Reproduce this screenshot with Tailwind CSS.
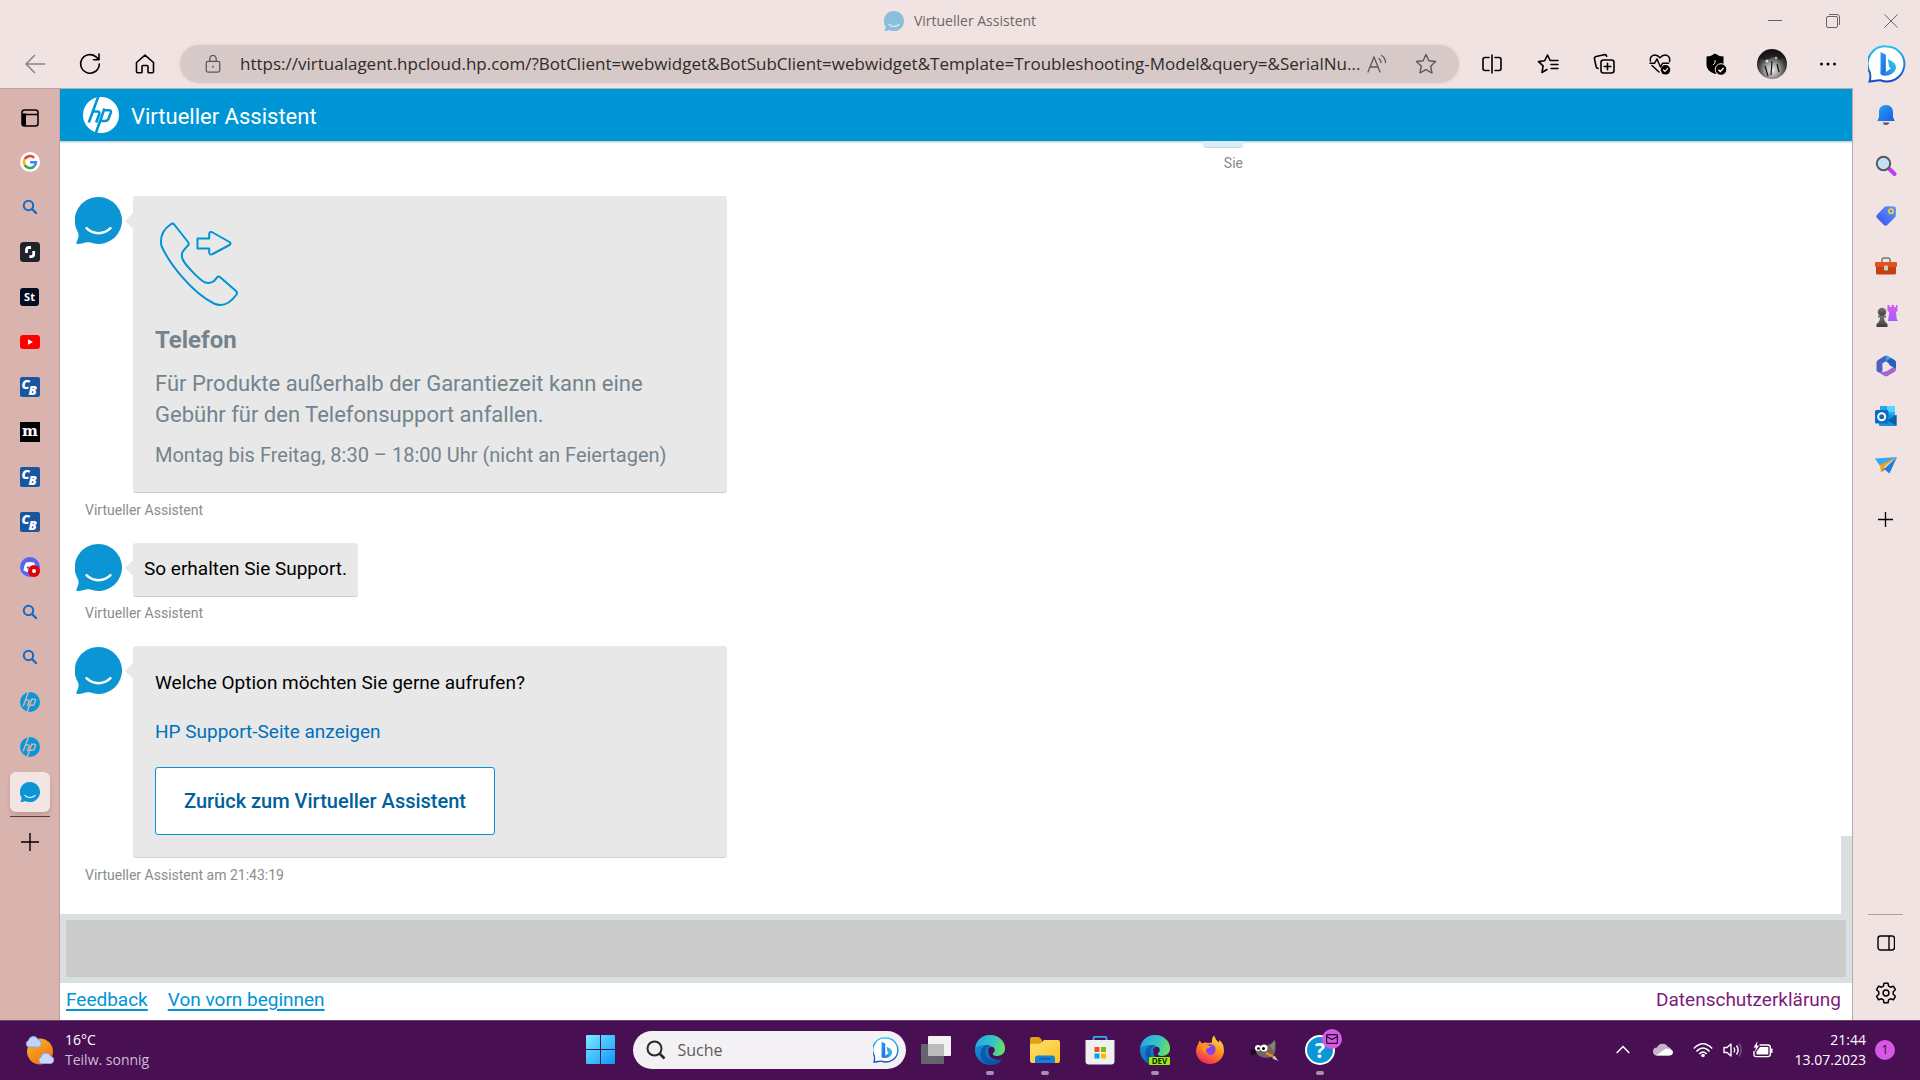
<!DOCTYPE html>
<html lang="de">
<head>
  <meta charset="UTF-8" />
  <meta name="viewport" content="width=device-width, initial-scale=1.0" />
  <title>Virtueller Assistent</title>
  <script src="https://cdn.jsdelivr.net/npm/@tailwindcss/browser@4"></script>
</head>
<body class="h-screen flex flex-col overflow-hidden bg-[#f1e3e2] font-['Open_Sans','Noto_Sans',sans-serif] text-black">

  <!-- Shared icons -->
  <svg class="absolute size-0" aria-hidden="true">
    <defs>
      <linearGradient id="bingRing" x1="0" y1="0" x2="0" y2="1"><stop offset="0" stop-color="#27c2f0" /><stop offset="1" stop-color="#1747c4" /></linearGradient>
      <linearGradient id="bingStem" x1="0" y1="0" x2="1" y2="1"><stop offset="0" stop-color="#2aa5f7" /><stop offset="1" stop-color="#1c5fdf" /></linearGradient>
      <linearGradient id="bingTail" x1="1" y1="0" x2="0" y2="1"><stop offset="0" stop-color="#37d3e6" /><stop offset="1" stop-color="#2468ea" /></linearGradient>
      <linearGradient id="edgeGreen" x1="0" y1="0.3" x2="1" y2="0.5"><stop offset="0" stop-color="#28a8e6" /><stop offset="0.6" stop-color="#36c5c0" /><stop offset="1" stop-color="#6fe05a" /></linearGradient>
      <linearGradient id="edgeBlue" x1="0" y1="0" x2="0.6" y2="1"><stop offset="0" stop-color="#1b9de2" /><stop offset="1" stop-color="#0a5fb8" /></linearGradient>
      <linearGradient id="bellFill" x1="0" y1="0" x2="1" y2="1"><stop offset="0" stop-color="#1fa5ee" /><stop offset="1" stop-color="#2357e8" /></linearGradient>
      <linearGradient id="winFill" x1="0" y1="0" x2="1" y2="1"><stop offset="0" stop-color="#7cecff" /><stop offset="1" stop-color="#0d95fb" /></linearGradient>
      <linearGradient id="sunFill" x1="0" y1="0" x2="0.6" y2="1"><stop offset="0" stop-color="#f7b92c" /><stop offset="1" stop-color="#f0760f" /></linearGradient>
      <linearGradient id="folderFill" x1="0" y1="0" x2="1" y2="1"><stop offset="0" stop-color="#ffdf72" /><stop offset="1" stop-color="#fcc21f" /></linearGradient>
      <linearGradient id="foxFill" x1="0.8" y1="0" x2="0.3" y2="1"><stop offset="0" stop-color="#ffe14a" /><stop offset="0.5" stop-color="#ff8a1c" /><stop offset="1" stop-color="#f1255f" /></linearGradient>
      <linearGradient id="tagFill" x1="0" y1="1" x2="1" y2="0"><stop offset="0" stop-color="#3c4ff0" /><stop offset="1" stop-color="#5b9bfa" /></linearGradient>
      <linearGradient id="rookFill" x1="0" y1="0" x2="0" y2="1"><stop offset="0" stop-color="#d65cf7" /><stop offset="1" stop-color="#a45cf4" /></linearGradient>
      <linearGradient id="pawnFill" x1="0" y1="0" x2="0" y2="1"><stop offset="0" stop-color="#777" /><stop offset="1" stop-color="#3d3a39" /></linearGradient>
      <radialGradient id="avatarFill" cx="0.5" cy="0.7" r="0.6"><stop offset="0" stop-color="#eee" /><stop offset="0.35" stop-color="#aaa" /><stop offset="0.7" stop-color="#4c4c4c" /><stop offset="1" stop-color="#161616" /></radialGradient>
    </defs>
    <symbol id="bubble" viewBox="0 0 47 47">
      <path d="M23.500 0a23.500 23.500 0 1 1-8 45.600c-4-1.500-8.500 1.400-12.600 1.400-1.400 0-1.900-1-1.300-2.200 1.500-3 2.800-6.500 1.400-9.300A23.500 23.500 0 0 1 23.500 0z" fill="#0b95d4" />
      <path d="M11.500 31.200c6.500 6.700 17.500 6.700 24 0" fill="none" stroke="#fff" stroke-width="2.400" stroke-linecap="round" />
    </symbol>
    <symbol id="hp" viewBox="0 0 36 36">
      <circle cx="18" cy="18" r="18" fill="currentColor" />
      <path d="M15.500-1 5.800 25.500M9.800 14.500h4.500q2.800 0 1.900 2.700l-3 8.300M21.500 11.500 12.500 37M20.600 13.200h5.200q2.800 0 1.900 2.700l-2 5.500q-.9 2.600-3.700 2.600h-4.500" fill="none" class="stroke-(--cut)" stroke-width="2.600" />
    </symbol>
    <symbol id="find" viewBox="0 0 20 20">
      <circle cx="8.500" cy="8.500" r="4.700" fill="none" stroke="#0f6cc9" stroke-width="2" />
      <path d="m12 12 4 4" stroke="#0f6cc9" stroke-width="2.400" stroke-linecap="round" />
    </symbol>
    <symbol id="cb" viewBox="0 0 20 20">
      <rect width="20" height="20" rx="2" fill="#1a559f" />
      <text x="1.500" y="11.500" font-family="Open Sans, sans-serif" font-size="13" font-weight="800" font-style="italic" fill="#fff">C</text>
      <text x="8.500" y="18" font-family="Open Sans, sans-serif" font-size="13" font-weight="800" font-style="italic" fill="#fff" stroke="#1a559f" stroke-width="1.500" paint-order="stroke">B</text>
    </symbol>
    <symbol id="bing" viewBox="0 0 38 38">
      <path d="M19 1.500a17.500 17.500 0 1 1-6.500 33.800c-3-.6-6.500 1.200-11 1.200 1.600-4 .7-6.500.4-9A17.500 17.500 0 0 1 19 1.500z" fill="#fff" stroke="url(#bingRing)" stroke-width="2" />
      <path d="m12.500 7 4.500 2.200c.5.300.8.800.8 1.400v18l-2.500 1.500c-1.800.8-2.800-.5-2.800-2z" fill="url(#bingStem)" />
      <path d="M19.800 14.200c4.800 1.800 8.200 3.800 8.200 8.300 0 5.500-8 8.800-11.500 8.200-2.800-.4-4-2-4-4.200 2 2.200 6 .9 10.500-3.200l-1.800-1.300z" fill="url(#bingTail)" />
    </symbol>
    <symbol id="edge" viewBox="0 0 30 30">
      <circle cx="15" cy="15" r="15" fill="url(#edgeBlue)" />
      <path d="M.3 12.500C1.500 5 7.500 0 15 0c8.500 0 15 6 15 13 0 5.500-4 8-8 8-3.500 0-5.200-1.200-4.500-2.200 2.800-3 .9-8.300-5-8.800C7.500 9.600 2.500 10.500.3 12.500z" fill="url(#edgeGreen)" />
      <path d="M10.500 17c0-3.500 2.300-6 5-6-4-2.500-9 .5-9.800 6-.8 6.500 4.300 13 11 13 5 0 8.800-2.500 10.800-6-6 3.500-17 2.500-17-7z" fill="#0c4f9d" opacity=".75" />
      <path d="M17.500 18.800c-.7 1 1 2.200 4.500 2.200 3.500 0 6.500-1.500 8-4.500V22l-2.500 2c-1 .3-2.500.8-4.500.8-5 0-9.500-3-9.500-7.300z" fill="#480f52" />
      <path d="M13.200 15a3.300 3.300 0 1 1 5 2.800l-1 2.700c-2.500-1-4-3-4-5.500z" fill="#480f52" />
    </symbol>
  </svg>

  <!-- Title bar -->
  <header class="grid grid-cols-[1fr_auto_1fr] items-center h-[41px] shrink-0">
    <span></span>
    <div class="flex items-center gap-[10px] text-sm text-[#6f6766]">
      <svg class="size-5 opacity-45"><use href="#bubble" /></svg>
      <span>Virtueller Assistent</span>
    </div>
    <div class="flex justify-end text-[#6b6463]">
      <button aria-label="Minimieren" class="w-[58px] h-10 grid place-items-center"><svg class="size-[14px]" viewBox="0 0 14 14" stroke="currentColor"><path d="M0 6.500h14" /></svg></button>
      <button aria-label="Verkleinern" class="w-[58px] h-10 grid place-items-center"><svg class="size-[14px]" viewBox="0 0 14 14" fill="none" stroke="currentColor"><rect x=".5" y="2.500" width="11" height="11" rx="1.500" /><path d="M3 .5h8q2.500 0 2.500 2.500v8" /></svg></button>
      <button aria-label="Schließen" class="w-[58px] h-10 grid place-items-center"><svg class="size-[14px]" viewBox="0 0 14 14" stroke="currentColor"><path d="m.5.5 13 13M13.500.5l-13 13" /></svg></button>
    </div>
  </header>

  <!-- Toolbar -->
  <nav class="flex items-center h-[47px] shrink-0 pl-[7px] pr-[2px] pb-[2px]">
    <button aria-label="Zurück" class="w-[55px] h-10 grid place-items-center text-[#8a8281]"><svg class="size-5" viewBox="0 0 20 20" fill="none" stroke="currentColor" stroke-width="1.500" stroke-linecap="round" stroke-linejoin="round"><path d="M19.500 10H1M9.500 1.500 1 10l8.500 8.500" /></svg></button>
    <button aria-label="Aktualisieren" class="w-[55px] h-10 grid place-items-center"><svg class="size-[22px]" viewBox="0 0 22 22" fill="none" stroke="currentColor" stroke-width="1.600" stroke-linecap="round" stroke-linejoin="round"><path d="M20.300 11a9.300 9.300 0 1 1-3.300-7.200L19.800 6.500M20 1v5.700h-5.500" /></svg></button>
    <button aria-label="Startseite" class="w-[55px] h-10 grid place-items-center"><svg class="size-5" viewBox="0 0 20 20" fill="none" stroke="currentColor" stroke-width="1.600" stroke-linejoin="round"><path d="M1.500 8.500 10 1.200l8.500 7.300v9.300q0 1-1 1h-3.700q-.8 0-.8-.8v-5.500q0-1-1-1H8q-1 0-1 1V18q0 .8-.8.800H2.500q-1 0-1-1z" /></svg></button>

    <div class="flex-1 min-w-0 flex items-center h-[38px] ml-2 mr-[5px] rounded-full bg-[#d7c9c8] pl-6 pr-5 text-[#5c5756] shadow-[0_0_4px_#e2d2d1]">
      <svg class="size-[18px] shrink-0" viewBox="0 0 18 20" fill="none" stroke="currentColor" stroke-width="1.400"><rect x="1.500" y="7" width="15" height="12" rx="2" /><path d="M5.500 7V4a3.500 3.500 0 0 1 7 0v3" /><circle cx="9" cy="13" r="1" fill="currentColor" stroke="none" /></svg>
      <input aria-label="Adresse" class="flex-1 min-w-0 ml-[18px] text-[17px] text-[#2f2b2b] outline-none" value="https://virtualagent.hpcloud.hp.com/?BotClient=webwidget&amp;BotSubClient=webwidget&amp;Template=Troubleshooting-Model&amp;query=&amp;SerialNu..." />
      <button aria-label="Laut vorlesen" class="w-7 h-8 mr-[10px] grid place-items-center"><svg class="size-5" viewBox="0 0 20 20" fill="none" stroke="currentColor" stroke-width="1.300" stroke-linecap="round"><path d="m1 18 6-15 6 15M3 13h8M12 4.500q2 1.500 2 4M14.500 1.500q4 2.500 4 7" /></svg></button>
      <button aria-label="Favorit" class="w-[50px] h-8 grid place-items-center -mr-3"><svg class="size-[22px]" viewBox="0 0 22 22" fill="none" stroke="currentColor" stroke-width="1.400" stroke-linejoin="round"><path d="m11 1.500 2.900 6.200 6.700.8-5 4.700 1.400 6.800-6-3.400L5 20l1.400-6.800-5-4.700 6.700-.8z" /></svg></button>
    </div>

    <button aria-label="Geteilter Bildschirm" class="w-14 h-10 grid place-items-center"><svg class="size-5" viewBox="0 0 20 20" fill="none" stroke="currentColor" stroke-width="1.600" stroke-linecap="round"><path d="M10 1v18M7 3.500H3q-2 0-2 2v9q0 2 2 2h4M13 3.500h4q2 0 2 2v9q0 2-2 2h-4" /></svg></button>
    <button aria-label="Favoriten" class="w-14 h-10 grid place-items-center"><svg class="size-[22px]" viewBox="0 0 22 22" fill="none" stroke="currentColor" stroke-width="1.600" stroke-linecap="round" stroke-linejoin="round"><path d="M13.200 7.500 10.500 2 7.700 7.700l-6.200.9 4.600 4.300L5 19.500l5-3M13.500 7.500H21M14 11.500h7M14 15.500h7" /></svg></button>
    <button aria-label="Sammlungen" class="w-14 h-10 grid place-items-center"><svg class="size-[22px]" viewBox="0 0 22 22" fill="none" stroke="currentColor" stroke-width="1.600" stroke-linecap="round" stroke-linejoin="round"><path d="M5 15.500q-1.500-.3-1.900-1.800L1.500 6q-.4-2 1.600-2.500l8-1.800q2-.4 2.600 1.500" /><rect x="8" y="7" width="13" height="13" rx="2.500" /><path d="M14.500 10.200v6.600M11.200 13.500h6.600" /></svg></button>
    <button aria-label="Browser-Grundlagen" class="w-14 h-10 grid place-items-center"><svg class="size-[22px]" viewBox="0 0 22 22" fill="none" stroke="currentColor" stroke-width="1.500" stroke-linecap="round" stroke-linejoin="round"><path d="M1.500 8C.5 4.500 3 2 6 2c2 0 3.500 1 5 2.800C12.500 3 14 2 16 2c3 0 5.500 2.500 4.500 6.500M3 12.500l7 6.500M1 10.300h4.500L8 6l3.500 8 2-3.700h6" /><circle cx="16.500" cy="16.800" r="4.800" fill="#000" stroke="none" /><path d="m14.500 17 1.400 1.400 2.600-2.800" stroke="#f1e3e2" stroke-width="1.300" /></svg></button>
    <button aria-label="Erweiterung" class="w-14 h-10 grid place-items-center"><svg class="size-[22px]" viewBox="0 0 22 22"><path d="M10 .5q3.500 2.800 8.500 3V12c0 5-5 7.500-8.500 9C6 19.500 1.500 16.500 1.500 12V3.500Q6.500 3.300 10 .5z" /><path d="M10 7v3l-2 2" stroke="#f1e3e2" /><circle cx="16" cy="16.500" r="5.800" stroke="#f1e3e2" /><path d="m13.500 16.700 1.800 1.800 3.300-3.500" fill="none" stroke="#fff" stroke-width="1.400" /></svg></button>
    <button aria-label="Profil" class="w-14 h-10 grid place-items-center"><svg class="size-[30px]" viewBox="0 0 30 30"><circle cx="15" cy="15" r="15" fill="url(#avatarFill)" /><path d="M2 8C8 1 20 0 27 7l-4 4q-6-6-10-1l-6 1z" fill="#151515" opacity=".7" /><path d="m8 17 3 10M20 15l2 8M15 12l-1 14" stroke="#111" stroke-width="1.200" /><circle cx="10" cy="12" r="1.500" fill="#ddd" /><circle cx="19" cy="9" r="1.200" fill="#bbb" /></svg></button>
    <button aria-label="Einstellungen und mehr" class="w-14 h-10 grid place-items-center"><svg class="size-[18px]" viewBox="0 0 18 18"><circle cx="2.500" cy="9" r="1.500" /><circle cx="9" cy="9" r="1.500" /><circle cx="15.500" cy="9" r="1.500" /></svg></button>
    <button aria-label="Bing-Chat" class="w-[62px] h-10 grid place-items-center"><svg class="size-[38px]"><use href="#bing" /></svg></button>
  </nav>

  <div class="flex flex-1 min-h-0">
    <!-- Vertical tabs -->
    <aside class="w-[60px] shrink-0 flex flex-col items-center pt-[7px] bg-[#d9b3ae] border-t border-r border-[#bf9f9b]">
      <button aria-label="Registerkarten" class="h-[43px] w-10 grid place-items-center"><svg class="size-[18px]" viewBox="0 0 18 18" fill="none" stroke="#000" stroke-width="1.500"><rect x="1" y="1" width="16" height="16" rx="2.500" /><path d="M1 5.500h16" /><path d="M1 4.500h4V17H3q-2 0-2-2z" fill="#000" stroke="none" /></svg></button>
      <button aria-label="Google" class="h-[45px] w-10 grid place-items-center"><svg class="size-5" viewBox="0 0 20 20" fill="none" stroke-width="2.600"><circle cx="10" cy="10" r="10" fill="#fff" /><path d="M14.200 5.800A6 6 0 0 0 4.700 7.200" stroke="#ea4335" /><path d="M4.700 7.200a6 6 0 0 0 0 5.600" stroke="#fbbc05" /><path d="M4.700 12.800a6 6 0 0 0 9.300 1.700" stroke="#34a853" /><path d="M14 14.500a6 6 0 0 0 2-4.200h-6" stroke="#4285f4" /></svg></button>
      <button aria-label="Suche 1" class="h-[45px] w-10 grid place-items-center"><svg class="size-5"><use href="#find" /></svg></button>
      <button aria-label="Shutterstock" class="h-[45px] w-10 grid place-items-center"><svg class="size-5" viewBox="0 0 20 20" fill="none" stroke="#fff" stroke-width="2.800"><rect width="20" height="20" rx="3.500" fill="#20222c" stroke="none" /><path d="M6.500 11V8q0-2.500 2.500-2.500h2M13.700 9v3q0 2.700-2.500 2.700H9.300" /></svg></button>
      <button aria-label="Adobe Stock" class="h-[45px] w-10 grid place-items-center"><svg class="size-5" viewBox="0 0 20 20"><rect y="1" width="19" height="18" rx="3" fill="#050d22" /><text x="9.500" y="14" text-anchor="middle" font-family="Open Sans, sans-serif" font-size="11" font-weight="700" fill="#fff">St</text></svg></button>
      <button aria-label="YouTube" class="h-[45px] w-10 grid place-items-center"><svg class="size-5" viewBox="0 0 20 20"><rect y="3" width="20" height="14" rx="3" fill="#f00" /><path d="m8 7.200 5 2.800-5 2.800z" fill="#fff" /></svg></button>
      <button aria-label="ComputerBase 1" class="h-[45px] w-10 grid place-items-center"><svg class="size-5"><use href="#cb" /></svg></button>
      <button aria-label="Magazin" class="h-[45px] w-10 grid place-items-center"><svg class="size-5" viewBox="0 0 20 20"><rect width="20" height="20" /><text x="10" y="14" text-anchor="middle" font-family="DejaVu Serif, serif" font-size="15" font-weight="700" fill="#fff">m</text></svg></button>
      <button aria-label="ComputerBase 2" class="h-[45px] w-10 grid place-items-center"><svg class="size-5"><use href="#cb" /></svg></button>
      <button aria-label="ComputerBase 3" class="h-[45px] w-10 grid place-items-center"><svg class="size-5"><use href="#cb" /></svg></button>
      <button aria-label="Discord" class="h-[45px] w-10 grid place-items-center"><svg class="size-5" viewBox="0 0 20 20"><circle cx="10" cy="10" r="10" fill="#5865f2" /><path d="M6 5.500q4-1 8 0 2.500 3.500 2.500 8L13 15H7l-3.500-1.500Q3.500 9 6 5.500z" fill="#fff" /><circle cx="8" cy="10.500" r="1.200" fill="#5865f2" /><circle cx="14" cy="14" r="6" fill="#e00109" /><circle cx="14" cy="14" r="2" fill="#fff" /></svg></button>
      <button aria-label="Suche 2" class="h-[45px] w-10 grid place-items-center"><svg class="size-5"><use href="#find" /></svg></button>
      <button aria-label="Suche 3" class="h-[45px] w-10 grid place-items-center"><svg class="size-5"><use href="#find" /></svg></button>
      <button aria-label="HP 1" class="h-[45px] w-10 grid place-items-center text-[#0a97d6] [--cut:#d9b3ae]"><svg class="size-5"><use href="#hp" /></svg></button>
      <button aria-label="HP 2" class="h-[45px] w-10 grid place-items-center text-[#0a97d6] [--cut:#d9b3ae]"><svg class="size-5"><use href="#hp" /></svg></button>
      <button aria-label="Virtueller Assistent" class="size-10 mt-[3px] mb-1 grid place-items-center rounded-md bg-[#f3e5e4] shadow-md"><svg class="size-5"><use href="#bubble" /></svg></button>
      <hr class="w-10 border-[#4d3f3e]" />
      <button aria-label="Neue Registerkarte" class="h-[50px] w-10 grid place-items-center"><svg class="size-[18px]" viewBox="0 0 18 18" stroke="#000" stroke-width="1.400"><path d="M9 0v18M0 9h18" /></svg></button>
    </aside>

    <!-- Chat page -->
    <main class="flex-1 min-w-0 flex flex-col bg-white border-t border-r border-[#b9a9a8] font-[Roboto,'Noto_Sans',sans-serif]">
      <header class="h-[52px] shrink-0 flex items-center gap-3 pl-[23px] bg-[#0096d6] text-white shadow-[0_1px_2px_#bbb]">
        <svg class="size-9 [--cut:#0096d6]"><use href="#hp" /></svg>
        <h1 class="pt-1 text-[22px] leading-[30px]">Virtueller Assistent</h1>
      </header>

      <div class="flex-1 min-h-0 flex">
        <section class="flex-1 min-w-0 flex flex-col text-[19px]">
          <div class="w-[1183px] flex flex-col items-end h-[55px]">
            <div class="w-10 h-[7px] rounded-b-sm bg-[#d9edf8] border-b border-[#c3d4dd]"></div>
            <span class="mt-[5px] text-sm leading-5 text-[#8c8c8c]">Sie</span>
          </div>

          <article class="flex pl-[15px]">
            <svg class="w-[47px] h-[47px] mt-px shrink-0"><use href="#bubble" /></svg>
            <div class="mt-[17px] ml-[3px] size-0 shrink-0 border-y-8 border-r-8 border-y-transparent border-r-[#e8e8e8]"></div>
            <div class="w-[594px] h-[297px] px-[22px] pt-[26px] rounded-[3px] bg-[#e8e8e8] border-b border-[#cfcfcf] text-[#74838d]">
              <svg class="block w-[90px] h-[84px]" viewBox="0 0 90 84" fill="none" stroke="#0093d6" stroke-width="2" stroke-linejoin="round"><path d="M15.500 2.500q2-2 3.700 0L33 20q1.500 2 0 3.500c-5 5-7.500 7.500-5.500 13.500C30 43 44 57 49 60c4 1.500 7.500 1 10-1l3-3.500q1.500-1.800 3.500 0L81 69q1.700 1.700.5 3.500C74 83 67 85 59 81.500 37 71 14 41 6.500 24 4.500 14 9 7 15.500 2.500z" /><path d="M42.500 16.500h11.700V11.500q1-2.500 3.500-1L74.500 20q2 1.500 0 3L57.700 32q-2.500 1.500-3.500-1v-4.500H42.500z" /></svg>
              <h2 class="mt-[18px] text-2xl font-bold">Telefon</h2>
              <p class="mt-[12px] text-[22px] leading-[31px]">Für Produkte außerhalb der Garantiezeit kann eine<br />Gebühr für den Telefonsupport anfallen.</p>
              <p class="mt-[10px] text-xl leading-[31px]">Montag bis Freitag, 8:30 – 18:00 Uhr (nicht an Feiertagen)</p>
            </div>
          </article>
          <p class="h-[50px] pl-[25px] pt-[7px] text-sm leading-5 text-[#8c8c8c]">Virtueller Assistent</p>

          <article class="flex pl-[15px]">
            <svg class="w-[47px] h-[47px] mt-px shrink-0"><use href="#bubble" /></svg>
            <div class="mt-[17px] ml-[3px] size-0 shrink-0 border-y-8 border-r-8 border-y-transparent border-r-[#e8e8e8]"></div>
            <p class="h-[54px] px-[11px] rounded-[3px] bg-[#e8e8e8] border-b border-[#cfcfcf] leading-[52px]">So erhalten Sie Support.</p>
          </article>
          <p class="h-[49px] pl-[25px] pt-[6px] text-sm leading-5 text-[#8c8c8c]">Virtueller Assistent</p>

          <article class="flex pl-[15px]">
            <svg class="w-[47px] h-[47px] mt-px shrink-0"><use href="#bubble" /></svg>
            <div class="mt-[17px] ml-[3px] size-0 shrink-0 border-y-8 border-r-8 border-y-transparent border-r-[#e8e8e8]"></div>
            <div class="w-[594px] h-[212px] px-[22px] pt-[21px] flex flex-col items-start rounded-[3px] bg-[#e8e8e8] border-b border-[#cfcfcf]">
              <p class="leading-[31px]">Welche Option möchten Sie gerne aufrufen?</p>
              <a href="#" class="mt-[18px] leading-[31px] text-[#0070bd]">HP Support-Seite anzeigen</a>
              <button class="mt-5 h-[68px] px-7 rounded-[3px] border border-[#0093d6] bg-white text-xl font-medium text-[#00609c]">Zurück zum Virtueller Assistent</button>
            </div>
          </article>
          <p class="pl-[25px] pt-[7px] text-sm leading-5 text-[#8c8c8c]">Virtueller Assistent am 21:43:19</p>
        </section>
        <div class="w-[11px] flex flex-col justify-end"><div class="h-[78px] bg-[#dadfe2]"></div></div>
      </div>

      <div class="h-[69px] shrink-0 p-[6px] bg-[#dadfe2]">
        <textarea disabled aria-label="Nachricht" class="block size-full resize-none bg-[#cbcbcb]"></textarea>
      </div>
      <footer class="h-[37px] shrink-0 flex items-center gap-5 pl-[6px] pr-[11px] pb-[3px] text-[19px]">
        <a href="#" class="underline underline-offset-3 decoration-2 text-[#0093d6]">Feedback</a>
        <a href="#" class="underline underline-offset-3 decoration-2 text-[#0093d6]">Von vorn beginnen</a>
        <a href="#" class="ml-auto text-[#7d1a7d]">Datenschutzerklärung</a>
      </footer>
    </main>

    <!-- Edge sidebar -->
    <aside class="w-[67px] shrink-0 flex flex-col items-center pt-[3px] pr-[2px]">
      <button aria-label="Benachrichtigungen" class="size-[50px] grid place-items-center"><svg class="size-[22px]" viewBox="0 0 22 22"><path d="M11 0c4.500 0 7 3 7 7v5l1.700 4H2.300L4 12V7c0-4 2.500-7 7-7z" fill="url(#bellFill)" /><path d="M7.500 17.500h7q-1 2.500-3.500 2.500t-3.500-2.500z" fill="#555" /></svg></button>
      <button aria-label="Suchen" class="size-[50px] grid place-items-center"><svg class="size-[22px]" viewBox="0 0 22 22"><path d="m14.500 14 5 5" stroke="#c13cf5" stroke-width="4" stroke-linecap="round" /><circle cx="8.500" cy="8.500" r="6.700" fill="#c4def2" stroke="#56595a" stroke-width="2" /></svg></button>
      <button aria-label="Einkaufen" class="size-[50px] grid place-items-center"><svg class="size-[22px]" viewBox="0 0 22 22"><path d="m11.500 1.200 7.500.3q2 .2 2 2l-.2 6.500q0 1.500-1 2.500l-7.500 7.500q-1.700 1.500-3.300 0l-7-7q-1.500-1.700 0-3.300L9.500 2q1-.8 2-.8z" fill="url(#tagFill)" /><circle cx="16" cy="6.300" r="2.200" fill="#5b8ff5" stroke="#f5d935" stroke-width="1.500" /></svg></button>
      <button aria-label="Tools" class="size-[50px] grid place-items-center"><svg class="size-6" viewBox="0 0 24 24"><path d="M8 8.500V6q0-2 2-2h4q2 0 2 2v2.500" fill="none" stroke="#777" stroke-width="1.500" /><path d="M2 12h20v7q0 1.500-1.500 1.500h-17Q2 20.500 2 19z" fill="#c5400f" /><rect x="1" y="8" width="22" height="5" rx="1" fill="#e0521f" /><rect x="10" y="11.500" width="4" height="5" rx="1" fill="#c9cdd0" /></svg></button>
      <button aria-label="Spiele" class="size-[50px] grid place-items-center"><svg class="size-6" viewBox="0 0 24 24"><path d="M13.500 1h2v2h2V1h2.500v2h2V1h1.500v6l-1.500 1 .7 7 1.300 2H14l1.300-9-1.800-1z" fill="url(#rookFill)" /><circle cx="8" cy="8" r="4.200" fill="url(#pawnFill)" /><path d="M4 11.500h8v2h-2q0 4 3.500 6.500v3h-11v-3Q6 17.500 6 13.500H4z" fill="url(#pawnFill)" /></svg></button>
      <button aria-label="Microsoft 365" class="size-[50px] grid place-items-center"><svg class="size-[22px]" viewBox="0 0 22 22"><path d="M10 .8q1.500-.6 3 .2l6.500 4q1.500 1 1.500 2.500v6L14 10V8l-3.500-1.500L8 8V2z" fill="#3c9fe3" /><path d="M9.500 1 3 5Q1.500 6 1.500 8v7q0 1.500 1.500 2l1 .5q3.500.5 3.500-3V8l3.500-2V2z" fill="#4c5fc4" /><path d="m21 10-6.500 4.500-3.500 2-7.500.8L9.500 21q1.500.8 3 0l7-4q1.500-1 1.500-3z" fill="#a368d0" /><path d="m16 3 3.500 2Q21 6 21 8v5.500L14.500 10l-3-4z" fill="#295fb8" /><circle cx="11" cy="11" r="3.400" fill="#f1e3e2" /></svg></button>
      <button aria-label="Outlook" class="size-[50px] grid place-items-center"><svg class="size-[22px]" viewBox="0 0 22 22"><path d="M5 1h15v11H5z" fill="#28a8ea" /><path d="M12 1h8v6h-8z" fill="#50d9ff" /><path d="M4 10h17.500v10q0 1-1 1H5q-1 0-1-1z" fill="#1490df" /><path d="m21.500 10-9 5.500 9 5.300z" fill="#0a5ea8" /><rect y="5" width="13.500" height="13.500" rx="1.500" fill="#0f6cbd" /><circle cx="6.700" cy="11.700" r="3.500" fill="none" stroke="#fff" stroke-width="2" /></svg></button>
      <button aria-label="Drop" class="size-[50px] grid place-items-center"><svg class="size-[22px]" viewBox="0 0 22 22"><path d="M0 3.500 22 2l-9 6-8 3z" fill="#37a9f0" /><path d="m22 2-7.500 16.500L9 14z" fill="#1c7de8" /><path d="M22 2 5 10l1 7.500L9 12z" fill="#f5a31d" /><path d="m9 12-3 5.500 4-3z" fill="#c26b12" /></svg></button>
      <button aria-label="Hinzufügen" class="size-[50px] mt-[3px] grid place-items-center"><svg class="size-[15px]" viewBox="0 0 15 15" stroke="#000" stroke-width="1.300"><path d="M7.500 0v15M0 7.500h15" /></svg></button>
      <hr class="mt-auto w-[35px] border-[#b09d9c]" />
      <button aria-label="Seitenleiste ausblenden" class="size-[50px] mt-[3px] grid place-items-center"><svg class="size-[18px]" viewBox="0 0 18 18" fill="none" stroke="#000" stroke-width="1.400"><rect x="1" y="2" width="16.500" height="14" rx="2.500" /><path d="M12 2v14" /></svg></button>
      <button aria-label="Einstellungen" class="size-[50px] mb-[2px] grid place-items-center"><svg class="size-[22px]" viewBox="0 0 22 22" fill="none" stroke="#000" stroke-width="1.500" stroke-linejoin="round"><circle cx="11" cy="11" r="2.900" /><path d="M9 1.200h4l.6 2.900 1.900 1.100 2.900-1 2 3.500-2.200 2v2.600l2.200 2-2 3.500-2.900-1-1.900 1.100-.6 2.900H9l-.6-2.900-1.900-1.100-2.900 1-2-3.500 2.200-2V9.700l-2.200-2 2-3.500 2.900 1 1.900-1.100z" /></svg></button>
    </aside>
  </div>

  <!-- Taskbar -->
  <footer class="h-[60px] shrink-0 grid grid-cols-[1fr_auto_1fr] items-center pb-[2px] bg-[#480f52] border-t border-[#6a4370] text-white">
    <button class="flex items-center gap-[10px] pl-[25px] text-left text-sm leading-5">
      <svg class="size-[30px]" viewBox="0 0 30 30"><circle cx="15" cy="16.500" r="13" fill="url(#sunFill)" /><path d="M3.500 12a3.500 3.500 0 0 1 0-6.500A5 5 0 0 1 13 4.500 4 4 0 0 1 14 12z" fill="#c3d3f8" stroke="#8aa3e0" /><path d="M16 28.500a3.500 3.500 0 0 1 0-6.500 5 5 0 0 1 9.500-1 4 4 0 0 1 1 7.500z" fill="#c9d8fb" stroke="#8aa3e0" /></svg>
      <span><span class="block">16°C</span><span class="block text-[#d0bdd4]">Teilw. sonnig</span></span>
    </button>

    <div class="flex items-center h-full">
      <button aria-label="Start" class="w-[55px] grid place-items-center"><svg class="size-[29px]" viewBox="0 0 29 29"><path d="M1 0h13v14H0V1q0-1 1-1zM15 0h13q1 0 1 1v13H15zM0 15h14v14H1q-1 0-1-1zM15 15h14v13q0 1-1 1H15z" fill="url(#winFill)" /></svg></button>
      <label class="flex items-center w-[273px] h-[38px] mx-[5px] pl-[13px] pr-[7px] rounded-full bg-[#f4f1f5]">
        <svg class="size-5" viewBox="0 0 20 20" fill="none" stroke="#2b2b2b" stroke-width="2"><circle cx="8.500" cy="8.500" r="7" /><path d="m13.500 13.500 5 5" stroke-width="2.600" /></svg>
        <input type="text" placeholder="Suche" aria-label="Suche" class="flex-1 min-w-0 ml-3 text-base placeholder:text-[#5c5860] outline-none" />
        <svg class="size-[26px]"><use href="#bing" /></svg>
      </label>
      <button aria-label="Aufgabenansicht" class="w-[50px] grid place-items-center"><svg class="size-[30px]" viewBox="0 0 30 30"><rect y="9" width="23" height="20" rx="1" fill="#65646a" /><rect x="7" y="1" width="23" height="20" rx="1" fill="#f2f2f2" /><path d="M7 9h16v12H7z" fill="#bcbcbc" /></svg></button>
      <button aria-label="Edge" class="relative w-[55px] h-full ml-[2px] grid place-items-center"><svg class="size-[30px]"><use href="#edge" /></svg><span class="absolute bottom-[3px] w-2 h-1 rounded-full bg-[#aa90b0]"></span></button>
      <button aria-label="Explorer" class="relative w-[55px] h-full grid place-items-center"><svg class="size-[30px]" viewBox="0 0 30 30"><path d="M0 4q0-2 2-2h7l3 3v6H0z" fill="#e0a012" /><path d="M0 9q2-.2 5-.2h5L14 5h14q2 0 2 2v19q0 2-2 2H2q-2 0-2-2z" fill="url(#folderFill)" /><path d="M5 28v-4.500q0-3 3-3h14q3 0 3 3V28z" fill="#1480d8" /><path d="M9.500 23.800h11" stroke="#0a5aa8" stroke-width="1.500" /></svg><span class="absolute bottom-[3px] w-2 h-1 rounded-full bg-[#aa90b0]"></span></button>
      <button aria-label="Microsoft Store" class="w-[55px] grid place-items-center"><svg class="size-[30px]" viewBox="0 0 30 30"><path d="M8.500 7V3q0-1.200 1.200-1.200h10.600q1.200 0 1.200 1.200v4" fill="none" stroke="#27b1f2" stroke-width="1.800" /><path d="M.5 5h29v21q0 3.500-3.500 3.500H4Q.5 29.500.5 26z" fill="#f0f0f0" /><path d="M9.500 12h5v5h-5z" fill="#f25022" /><path d="M16 12h5v5h-5z" fill="#7fba00" /><path d="M9.500 18.500h5v5h-5z" fill="#00a4ef" /><path d="M16 18.500h5v5h-5z" fill="#ffb900" /></svg></button>
      <button aria-label="Edge Dev" class="relative w-[55px] h-full grid place-items-center"><svg class="size-[30px]" viewBox="0 0 30 30"><use href="#edge" /><rect x="9" y="22" width="21" height="8" rx="1" fill="#96f00c" /><text x="19.500" y="29" text-anchor="middle" font-family="Open Sans, sans-serif" font-size="8" font-weight="700" fill="#10280a">DEV</text></svg><span class="absolute bottom-[3px] w-2 h-1 rounded-full bg-[#aa90b0]"></span></button>
      <button aria-label="Firefox" class="w-[55px] grid place-items-center"><svg class="size-[30px]" viewBox="0 0 30 30"><path d="M4.500 5.500 7 8.500q3-1.500 6-.5l4-.5q-.5-4.500 2-7 1.500 4.500 5 7l.5-2.500Q29 9 29 15.500C29 23 23 29 15 29S1 23 1 16q0-4 2-6.500z" fill="url(#foxFill)" /><circle cx="15" cy="14.500" r="5.500" fill="#8a3ff0" /><path d="M5.500 10q4-2 7.500.5l3 .5q-1.500 2.500-5 3-1 4 4 6-7-.5-9.500-10z" fill="#ff9420" /></svg></button>
      <button aria-label="GIMP" class="w-[55px] grid place-items-center"><svg class="size-[30px]" viewBox="0 0 30 30"><path d="M5 14q3-4 8-3.500 7 .5 12-5.500 1.500 7-.5 14-4 5-11 3.500-6-.5-8.500-8.500z" fill="#6e6860" /><path d="m24 16 1-11-5 6z" fill="#8a847b" /><circle cx="8" cy="13" r="3" fill="#fff" /><circle cx="14" cy="13" r="3.500" fill="#fff" /><circle cx="8.500" cy="13.500" r="1.300" /><circle cx="13.500" cy="13.500" r="1.500" /><circle cx="3" cy="17" r="2.800" fill="#111" /><path d="m16 18 9 4.500" stroke="#f08a24" stroke-width="2.200" /><path d="m24.500 21 4 5-6-2.500z" fill="#ccc" /></svg></button>
      <button aria-label="HP Support Assistant" class="relative w-[55px] h-full grid place-items-center"><svg class="size-[30px]" viewBox="0 0 30 30"><circle cx="15" cy="15" r="14" fill="#0b96d8" stroke="#fff" stroke-width="2" /><text x="15" y="23" text-anchor="middle" font-family="Open Sans, sans-serif" font-size="21" font-weight="700" fill="#fff">?</text></svg><span class="absolute top-2 left-[29px] size-5 rounded-full bg-[#d957e6] grid place-items-center"><svg class="w-3 h-[10px]" viewBox="0 0 12 10" fill="none" stroke="#1d0820" stroke-width="1.200"><rect x=".6" y=".6" width="10.800" height="8.800" rx="1" /><path d="m.6 2.500 5.400 3 5.400-3" /></svg></span><span class="absolute bottom-[3px] w-2 h-1 rounded-full bg-[#aa90b0]"></span></button>
    </div>

    <div class="flex items-center justify-end pr-[25px]">
      <button aria-label="Ausgeblendete Symbole" class="mr-[23px]"><svg class="w-[14px] h-[9px]" viewBox="0 0 14 9" fill="none" stroke="#fff" stroke-width="1.500"><path d="m.7 8 6.300-6.500L13.300 8" /></svg></button>
      <button aria-label="OneDrive" class="mr-5"><svg class="w-5 h-[13px]" viewBox="0 0 20 13"><path d="M4 12.500a4 4 0 0 1 0-8 6 6 0 0 1 11-.5 4.500 4.500 0 0 1 1 8.500z" fill="#c7b5cb" /><path d="m3 12.500 10-7q7 .5 7 3.500 0 3.500-4 3.500z" fill="#fff" /></svg></button>
      <button aria-label="Netzwerk, Lautstärke und Akku" class="flex items-center gap-[10px] mr-[22px]">
        <svg class="w-5 h-4" viewBox="0 0 20 16" fill="none" stroke="#fff" stroke-width="1.500"><path d="M.8 6.500q9.200-9.500 18.400 0M3.500 9.500q6.500-7 13 0M6.300 12q3.700-4 7.400 0" /><circle cx="10" cy="13.500" r="1.800" fill="#fff" stroke="none" /></svg>
        <svg class="w-5 h-4" viewBox="0 0 20 16" fill="none" stroke="#fff" stroke-width="1.400" stroke-linejoin="round"><path d="M1 5.500h3L8 2v12l-4-3.500H1zM11 5.500q1.500 2.500 0 5M13.500 3.500q3.300 4.500 0 9" /><path d="M16 1.500q4.500 6.500 0 13" stroke="#7b5282" /></svg>
        <svg class="w-5 h-[18px]" viewBox="0 0 20 18" fill="none" stroke="#fff" stroke-width="1.400"><path d="M6.500 4H15q2.300 0 2.300 2.300v7q0 2.300-2.300 2.300H3Q1 15.600 1 13.500V10" /><path d="M7 6h8.300v7.500H3.500v-3z" fill="#fff" stroke="none" /><path d="M18.500 7.500v4.500" stroke-width="2" /><path d="M4.500 0 .5 6.500h2.300L2 11l4-6.500H3.800z" fill="#fff" stroke="none" /></svg>
      </button>
      <button class="flex items-center gap-[9px] text-sm leading-5 text-right">
        <span><span class="block">21:44</span><span class="block">13.07.2023</span></span>
        <span class="size-5 rounded-full bg-[#d957e6] text-[#2a0c30] text-xs leading-5 text-center">1</span>
      </button>
    </div>
  </footer>
</body>
</html>
